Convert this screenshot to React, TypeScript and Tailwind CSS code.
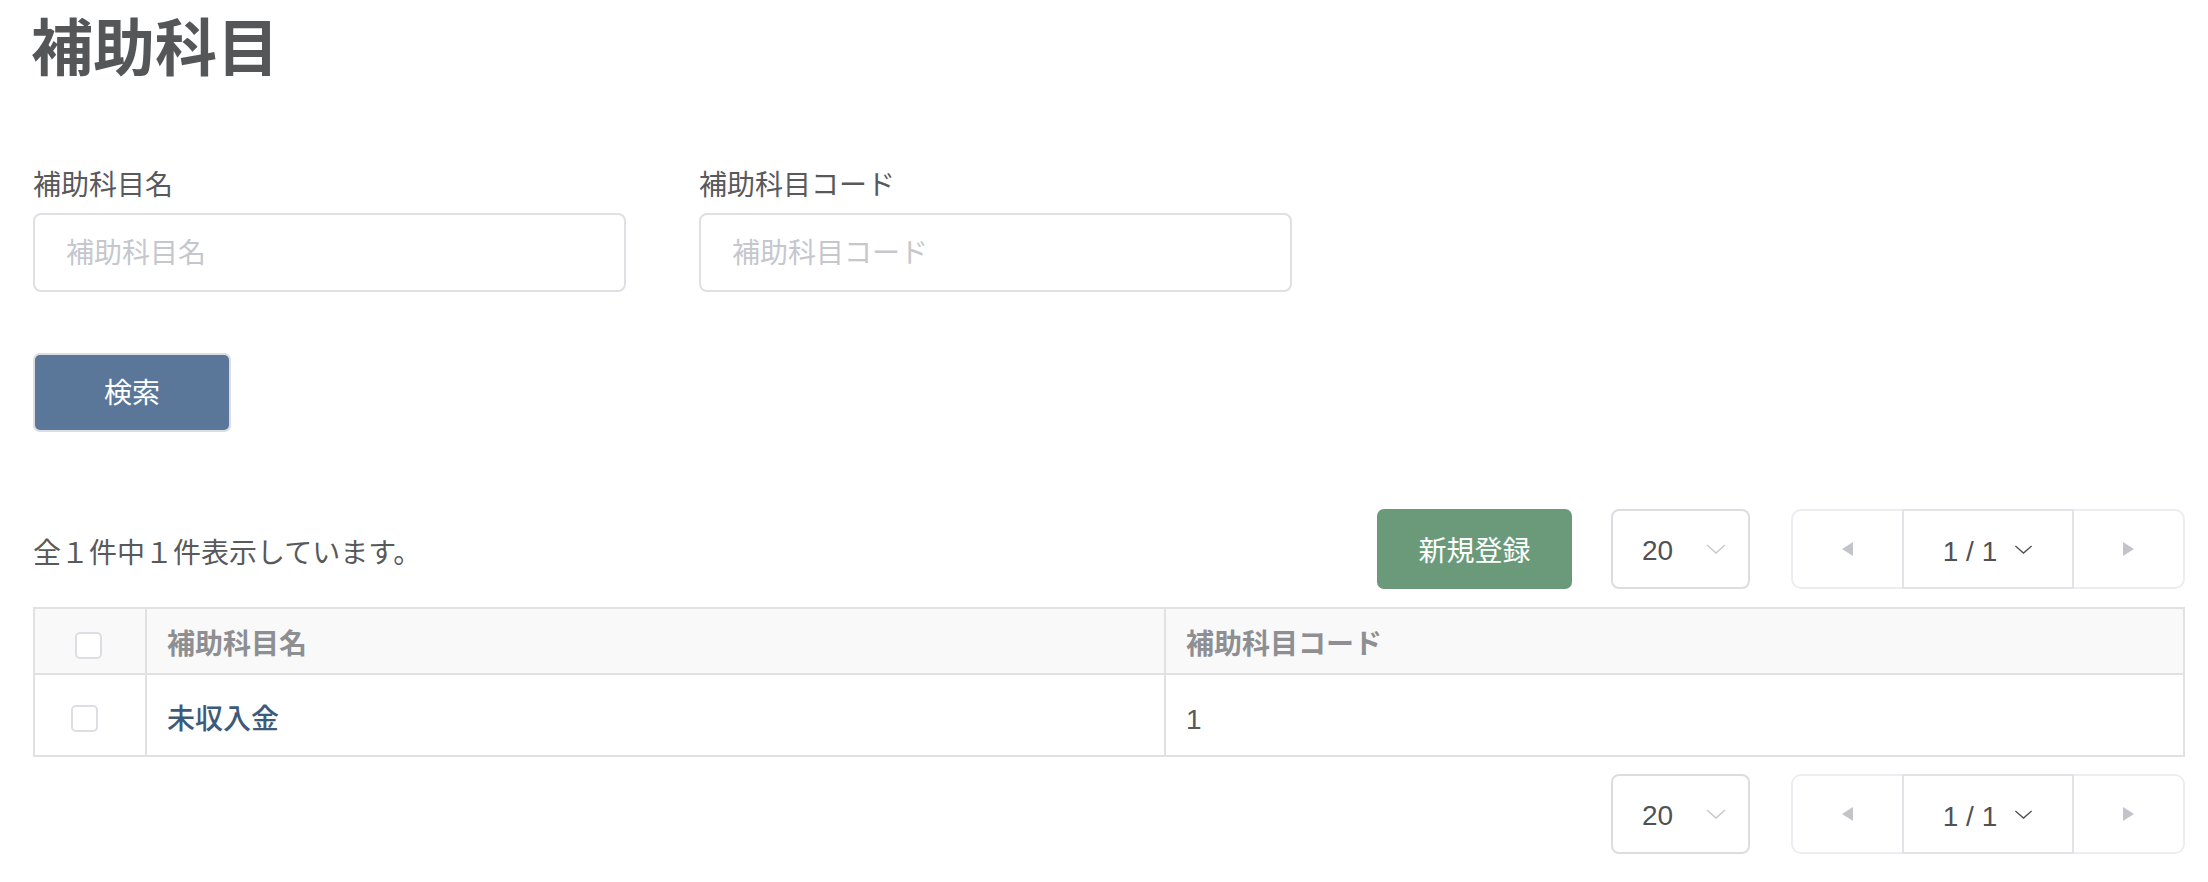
import { useState } from 'react';

// ============================================
// Small pieces
// ============================================

function Chevron({ className }: { className?: string }) {
  return (
    <svg viewBox="0 0 20 10" className={className} fill="none">
      <path d="M1 1 L10 9 L19 1" stroke="currentColor" strokeWidth="1.5" />
    </svg>
  );
}

function Checkbox() {
  return <span className="block w-[27px] h-[27px] rounded-[5px] border-2 border-[#dddee3] bg-white" />;
}

function PageSizeSelect() {
  return (
    <div className="w-[139px] h-[80px] rounded-[8px] border-2 border-[#dcdde1] flex items-center justify-between pl-[29px] pr-[22px] bg-white">
      <span className="pt-[4px] text-[28px] text-[#505154]">20</span>
      <Chevron className="w-[20px] h-[10px] text-[#c7c8cd]" />
    </div>
  );
}

function Pager() {
  return (
    <div className="w-[394px] h-[80px] rounded-[10px] border-2 border-[#ededf1] flex bg-white">
      <button className="w-[109px] flex items-center justify-center">
        <svg viewBox="0 0 11 14" className="w-[11px] h-[14px]">
          <path d="M11 0 L0 7 L11 14 Z" fill="#c2c4ca" />
        </svg>
      </button>
      <div className="flex-1 -my-[2px] border-2 border-[#e2e2e7] flex items-center justify-center gap-[17px]">
        <span className="pt-[5px] text-[28px] text-[#505154]">1 / 1</span>
        <Chevron className="w-[19px] h-[9px] text-[#505154]" />
      </div>
      <button className="w-[109px] flex items-center justify-center">
        <svg viewBox="0 0 11 14" className="w-[11px] h-[14px]">
          <path d="M0 0 L11 7 L0 14 Z" fill="#c2c4ca" />
        </svg>
      </button>
    </div>
  );
}

function Field({ label }: { label: string }) {
  const [value, setValue] = useState('');
  return (
    <div className="w-[593px]">
      <div className="pt-[3px] h-[43px] leading-[40px] text-[28px] text-[#58595b]">{label}</div>
      <input
        value={value}
        onChange={e => setValue(e.target.value)}
        placeholder={label}
        className="mt-[7px] w-full h-[79px] rounded-[8px] border-2 border-[#dfe0e4] pl-[31px] pt-[3px] text-[28px] text-[#58595b] placeholder:text-[#c5c7cd] outline-none"
      />
    </div>
  );
}

// ============================================
// Main
// ============================================

export default function App() {
  return (
    <div
      className="min-h-[882px] bg-white pl-[33px] pr-[23px] pt-[20px] pb-[20px]"
      style={{ fontFamily: '"Liberation Sans", "Noto Sans CJK JP", sans-serif' }}
    >
      <h1 className="text-[62px] leading-[60px] font-bold text-[#555658] -ml-[2px]">補助科目</h1>

      {/* Search form */}
      <div className="mt-[83px] flex gap-[73px]">
        <Field label="補助科目名" />
        <Field label="補助科目コード" />
      </div>

      <button className="mt-[61px] w-[198px] h-[79px] rounded-[7px] border-2 border-[#dcdde2] bg-[#5a7799] pt-[3px] text-white text-[28px]">
        検索
      </button>

      {/* Toolbar */}
      <div className="mt-[77px] h-[80px] flex items-center justify-between">
        <p className="pt-[10px] text-[28px] text-[#58595b]">全１件中１件表示しています。</p>
        <div className="flex items-center">
          <button className="w-[195px] h-[80px] rounded-[7px] bg-[#6b9a7b] pt-[5px] text-white text-[28px]">新規登録</button>
          <div className="ml-[39px]">
            <PageSizeSelect />
          </div>
          <div className="ml-[41px]">
            <Pager />
          </div>
        </div>
      </div>

      {/* Table */}
      <table className="mt-[18px] w-full table-fixed border-collapse border-2 border-[#e1e1e4] text-[28px]">
        <colgroup>
          <col className="w-[112px]" />
          <col />
          <col />
        </colgroup>
        <thead>
          <tr className="h-[66px] bg-[#f9f9f9] border-b-2 border-[#e1e1e4]">
            <th className="border-r-2 border-[#e1e1e4] pl-[40px] pt-[8px] text-left">
              <Checkbox />
            </th>
            <th className="border-r-2 border-[#e1e1e4] pl-[20px] pt-[8px] text-left font-bold text-[#8e8f93]">補助科目名</th>
            <th className="pl-[20px] pt-[8px] text-left font-bold text-[#8e8f93]">補助科目コード</th>
          </tr>
        </thead>
        <tbody>
          <tr className="h-[82px]">
            <td className="border-r-2 border-[#e1e1e4] pl-[36px] pt-[6px]">
              <Checkbox />
            </td>
            <td className="border-r-2 border-[#e1e1e4] pl-[20px] pt-[10px]">
              <a href="#" className="font-medium text-[#3e5a7b]">未収入金</a>
            </td>
            <td className="pl-[20px] pt-[10px] text-[#58595b]">1</td>
          </tr>
        </tbody>
      </table>

      {/* Bottom pagination */}
      <div className="mt-[17px] flex justify-end items-center">
        <PageSizeSelect />
        <div className="ml-[41px]">
          <Pager />
        </div>
      </div>
    </div>
  );
}
